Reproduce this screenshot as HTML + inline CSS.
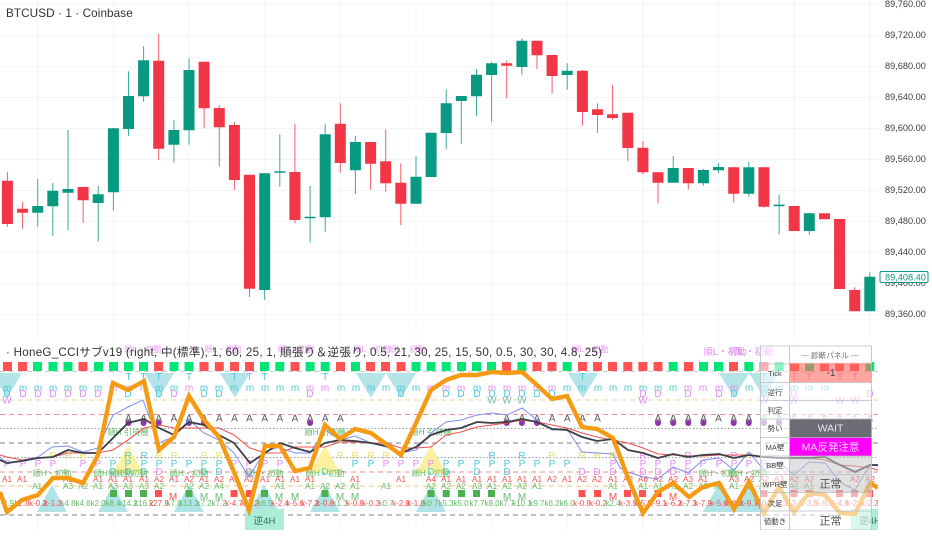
<!DOCTYPE html>
<html><head><meta charset="utf-8"><title>BTCUSD</title>
<style>
html,body{margin:0;padding:0;background:#fff;width:932px;height:550px;overflow:hidden}
svg{display:block;filter:blur(.35px)}
text{font-family:"Liberation Sans","Noto Sans CJK JP",sans-serif}
.ax{font-size:9.2px;fill:#3a3d45}
.t{font-size:9.2px;fill:#3a3d45;text-anchor:middle}
.s{font-size:10px;text-anchor:middle}
.pk{fill:#e58af5}.tl{fill:#4fcbd6}.yl{fill:#ece27a}.gn{fill:#66bb6a}.rd{fill:#ef5350}.dk{fill:#5a5a5a}
.n{font-size:8px;text-anchor:middle;fill:#66bb6a}.m{font-size:8px;text-anchor:middle;fill:#ef5350}
.j{font-size:8.2px;text-anchor:middle;fill:#66bb6a}
.l{font-size:7.5px;text-anchor:middle;fill:#444}
</style></head><body>
<svg width="932" height="550" viewBox="0 0 932 550" xmlns="http://www.w3.org/2000/svg">
<rect width="932" height="550" fill="#fff"/>
<defs><clipPath id="c"><rect x="0" y="338" width="878" height="192"/></clipPath><clipPath id="t"><rect x="0" y="530" width="878" height="20"/></clipPath><clipPath id="a"><rect x="880" y="340" width="52" height="190"/></clipPath></defs>

<!-- grid -->
<path d="M37.7 0V335M113.4 0V335M189 0V335M264.7 0V335M340.3 0V335M416 0V335M491.6 0V335M567.2 0V335M642.9 0V335M718.5 0V335M794.2 0V335M869.8 0V335M37.7 338V530M113.4 338V530M189 338V530M264.7 338V530M340.3 338V530M416 338V530M491.6 338V530M567.2 338V530M642.9 338V530M718.5 338V530M794.2 338V530M869.8 338V530" stroke="#f3f4f6" stroke-width="1" fill="none"/>
<path d="M0 4.5H878M0 35.5H878M0 66.5H878M0 97.5H878M0 128.5H878M0 159.5H878M0 190.5H878M0 221.5H878M0 252.5H878M0 283.5H878M0 314.5H878" stroke="#f3f4f6" stroke-width="1" fill="none"/>

<!-- wicks -->
<g stroke-width="1" fill="none" stroke-opacity=".8">
<path stroke="#089981" d="M37.7 179V226.7M52.8 183V236M68 130V230.3M98.2 185.7V241.7M113.4 128V210.7M128.5 71.3V135.7M143.6 46.3V101.7M173.9 120.3V162.7M189 58V144.7M264.7 173V299.7M279.8 134.3V186.7M310.1 185.7V242.7M325.2 124.3V231.7M355.4 135.7V194M416 156V204M446.2 89.3V149.3M461.3 96V143.7M476.5 69V116M491.6 62V121.7M521.9 38.3V75M567.2 63.3V89.7M673.2 156V182.7M703.4 169V185.7M718.5 163.3V173M748.8 162V196.7M779.1 194.7V234.3M809.3 213V235M869.8 272.3V311"/>
<path stroke="#f23645" d="M7.4 172V227M22.6 201.7V228.7M83.1 187V222.7M158.7 34V160M204.1 62V128.3M219.3 105.3V166.7M234.4 122V190M249.5 175V297M294.9 124V223.3M340.3 103.3V172.7M370.6 142V190M385.7 129.3V191.7M400.8 163.3V225M506.7 60.7V98.3M537 41V69M552.1 55V93.7M582.4 70V125.7M597.5 103.3V133M612.6 85V119.7M627.8 113V161.3M642.9 141V174.3M658 172V203.3M688.3 168V189.3M733.7 167V202.7M763.9 167V207.7M854.7 287.3V311"/>
</g>
<!-- doji bars -->
<path fill="#089981" d="M274.3 171.3h11v1.5h-11zM304.6 216.7h11v1.5h-11zM773.6 204.6h11v1.6h-11z"/>
<!-- green bodies -->
<path fill="#089981" d="M32.2 206h11V212.7h-11zM47.3 190.7h11V206.3h-11zM62.5 189h11V192.7h-11zM92.7 194.3h11V203h-11zM107.9 128.3h11V192.3h-11zM123 96h11V129h-11zM138.1 60.3h11V96.3h-11zM168.4 130h11V144.7h-11zM183.5 70h11V130.3h-11zM259.2 173.3h11V290h-11zM319.7 134.3h11V217.3h-11zM349.9 142h11V170.3h-11zM410.5 176.7h11V203.7h-11zM425.6 132.7h11V177h-11zM440.7 103.3h11V133h-11zM455.8 96h11V101h-11zM471 74.7h11V96.3h-11zM486.1 63.3h11V75h-11zM516.4 40.7h11V67h-11zM561.7 70.7h11V75h-11zM667.7 168h11V182.7h-11zM697.9 170h11V183.3h-11zM713 167h11V170.3h-11zM743.3 167.3h11V193.7h-11zM803.8 213.3h11V231h-11zM864.3 276.7h11V311.3h-11z"/>
<!-- red bodies -->
<path fill="#f23645" d="M1.9 180.7h11V224h-11zM17.1 208.7h11V212.7h-11zM77.6 187h11V200.3h-11zM153.2 60.7h11V148.7h-11zM198.6 61.7h11V108.3h-11zM213.8 108h11V127.3h-11zM228.9 125h11V180h-11zM244 174.7h11V288.7h-11zM289.4 172h11V220h-11zM334.8 123.7h11V163h-11zM365.1 142h11V163.7h-11zM380.2 161.3h11V183.3h-11zM395.3 182.7h11V203.7h-11zM501.2 63.3h11V65.7h-11zM531.5 40.7h11V55.3h-11zM546.6 55h11V76h-11zM576.9 70.7h11V112h-11zM592 109.3h11V115h-11zM607.1 114.3h11V118h-11zM622.3 112.7h11V148h-11zM637.4 147.7h11V172.3h-11zM652.5 172.3h11V182.7h-11zM682.8 168h11V183.3h-11zM728.2 167.3h11V193.7h-11zM758.4 167.3h11V206.7h-11zM788.7 206h11V231h-11zM819 213.3h11V219.3h-11zM834.1 219h11V289h-11zM849.2 290h11V311.3h-11z"/>

<text x="6" y="17" font-size="11.7" fill="#333" letter-spacing=".1">BTCUSD · 1 · Coinbase</text>

<!-- price axis -->
<g class="ax">
<text class="ax" x="885" y="7">89,760.00</text>
<text class="ax" x="885" y="38">89,720.00</text>
<text class="ax" x="885" y="69">89,680.00</text>
<text class="ax" x="885" y="100">89,640.00</text>
<text class="ax" x="885" y="131">89,600.00</text>
<text class="ax" x="885" y="162">89,560.00</text>
<text class="ax" x="885" y="193">89,520.00</text>
<text class="ax" x="885" y="224">89,480.00</text>
<text class="ax" x="885" y="255">89,440.00</text>
<text class="ax" x="885" y="286">89,400.00</text>
<text class="ax" x="885" y="317">89,360.00</text>
</g>
<rect x="880" y="271.5" width="48" height="11" rx="1.5" fill="#fff" stroke="#089981" stroke-width="1"/>
<text x="885" y="280.5" font-size="9.2" fill="#089981">89,408.40</text>

<!-- lower pane -->
<g clip-path="url(#c)">
<path d="M0 371.5H878" stroke="#bdbdbd" stroke-dasharray="5 4" stroke-width="1" opacity=".7"/>
<path d="M0 400H878" stroke="#f2d39a" stroke-dasharray="5 4" stroke-width="1"/>
<path d="M0 414.5H878" stroke="#f28b93" stroke-dasharray="5 4" stroke-width="1"/>
<path d="M0 428.5H878" stroke="#9e9e9e" stroke-dasharray="1.5 2" stroke-width="1"/>
<path d="M0 443H878" stroke="#9a9a9a" stroke-dasharray="5 4" stroke-width="1.2"/>
<path d="M0 457.5H878" stroke="#9e9e9e" stroke-dasharray="1.5 2" stroke-width="1"/>
<path d="M0 472H878" stroke="#f28b93" stroke-dasharray="5 4" stroke-width="1"/>
<path d="M0 486H878" stroke="#f2c77a" stroke-dasharray="5 4" stroke-width="1"/>
<path d="M0 515H878" stroke="#9e9e9e" stroke-dasharray="5 4" stroke-width="1.2"/>

<!-- down triangles -->
<path fill="#b4e4e8" d="M-8 373h30L7 398zM144 373h30L159 398zM220 373h30L235 398zM356 373h30L371 398zM386 373h30L401 398zM568 373h30L583 398zM719 373h30L734 398zM749 373h30L764 398z"/>
<!-- up triangles -->
<path fill="#b0e4e6" d="M37 512h30L52 485zM98 512h30L113 485zM174 512h30L189 485zM249 512h30L264 485zM310 512h30L325 485zM416 512h30L431 485zM703 512h30L718 485zM733 512h30L748 485z"/>
<path fill="#fdf1a0" d="M113 473h30L128 445zM310 473h30L325 445zM416 473h30L431 445z"/>

<!-- ghost top labels -->
<g font-size="8.2" fill="#ee9df7" text-anchor="middle">
<text x="143" y="352">順L・初動</text><text x="223" y="352">順L・初動</text><text x="296" y="352">順L・初動</text>
<text x="372" y="352">順L・初動</text><text x="407" y="352">順L・初動</text><text x="590" y="352">順L・初動</text>
</g>
<g font-size="9.4" fill="#e58af5" text-anchor="middle">
<text x="725" y="355">順L・初動</text><text x="752" y="355">順L・初動</text>
</g>

<!-- top squares -->
<g>
<path fill="#ff5252" d="M3 362h9v9h-9zM18 362h9v9h-9zM78.5 362h9v9h-9zM154 362h9v9h-9zM199.5 362h9v9h-9zM214.8 362h9v9h-9zM230 362h9v9h-9zM245 362h9v9h-9zM290.5 362h9v9h-9zM336 362h9v9h-9zM366 362h9v9h-9zM381 362h9v9h-9zM396.5 362h9v9h-9zM502 362h9v9h-9zM532.5 362h9v9h-9zM547.5 362h9v9h-9zM578 362h9v9h-9zM593 362h9v9h-9zM608 362h9v9h-9zM623.3 362h9v9h-9zM638.4 362h9v9h-9zM653.5 362h9v9h-9zM684 362h9v9h-9zM729 362h9v9h-9zM759.5 362h9v9h-9zM790 362h9v9h-9zM820 362h9v9h-9zM835 362h9v9h-9zM850 362h9v9h-9z"/>
<path fill="#00e676" d="M33 362h9v9h-9zM48.5 362h9v9h-9zM63.5 362h9v9h-9zM94 362h9v9h-9zM109 362h9v9h-9zM124 362h9v9h-9zM139 362h9v9h-9zM169.5 362h9v9h-9zM184.5 362h9v9h-9zM260 362h9v9h-9zM275.3 362h9v9h-9zM305.6 362h9v9h-9zM320.7 362h9v9h-9zM351 362h9v9h-9zM411.5 362h9v9h-9zM426.6 362h9v9h-9zM441.7 362h9v9h-9zM457 362h9v9h-9zM472 362h9v9h-9zM487 362h9v9h-9zM517.4 362h9v9h-9zM562.7 362h9v9h-9zM668.7 362h9v9h-9zM699 362h9v9h-9zM714 362h9v9h-9zM744.3 362h9v9h-9zM774.6 362h9v9h-9zM805 362h9v9h-9zM865.3 362h9v9h-9z"/>
</g>

<!-- letter rows -->
<g>
<text class="s tl" x="128.5 143.6 158.7 189 234.4 264.7 325.2 582.4 763.9" y="380">TTTTTTTTT</text>
<text class="s pk" x="249.5 794 809 840 855" y="380">TTTTT</text>
<text class="s tl" x="7 23 38 53 68 83 98 159 174 204 219 234 250 265 280 295 341 356 371 386 401 416 477 567 582 598 613 628 643 658 673 749 764 779 794 809 825" y="391">mmmmmmmmmmmmmmmmmmmmmmmmmmmmmmmmmmmmm</text>
<text class="s pk" x="113 128 144 189 310 325 431 446 461 492 507 522 537 552 688 703 719 734" y="391">mmmmmmmmmmmmmmmmmm</text>
<text class="s tl" x="7 128 159 204 219 401 446 461 477 492 507 522 537 552 734 764" y="397">DDDDDDDDDDDDDDDD</text>
<text class="s pk" x="23 38 53 68 83 98 174 310 643 658 688 719 794 870" y="397">DDDDDDDDDDDDDD</text>
<text class="s pk" x="7 643 764 794 840 855" y="403.5">WWWWWW</text>
<text class="s" fill="#7bb7b9" x="492 507 522" y="403.5">WWW</text>
<text class="s dk" x="128.5 143.6 158.7 173.9 189 204.1 219.3 234.4 249.5 264.7 279.8 294.9 310.1 325.2 340.3 506.7 521.9 537 552.1 567.2 582.4 597.5 658 673.2 688.3 703.4 718.5 733.7 748.8" y="421.5">AAAAAAAAAAAAAAAAAAAAAAAAAAAAA</text>
<text class="s" fill="#9aa" x="763.9 779.1 794.2 809.3 824.5 839.6 854.7 869.8" y="421.5">AAAAAAAA</text>
<g fill="#8e35a8"><circle cx="128.5" cy="423" r="3"/><circle cx="143.6" cy="423" r="3"/><circle cx="158.7" cy="423" r="3"/><circle cx="189" cy="423" r="3"/><circle cx="204.1" cy="423" r="3"/><circle cx="310.1" cy="423" r="3"/><circle cx="506.7" cy="423" r="3"/><circle cx="521.9" cy="423" r="3"/><circle cx="537" cy="423" r="3"/><circle cx="658" cy="423" r="3"/><circle cx="673.2" cy="423" r="3"/><circle cx="688.3" cy="423" r="3"/><circle cx="703.4" cy="423" r="3"/><circle cx="733.7" cy="423" r="3"/><circle cx="748.8" cy="423" r="3"/><circle cx="763.9" cy="423" r="3" opacity=".7"/><circle cx="779" cy="423" r="3" opacity=".7"/></g>

<text class="s yl" x="53 68 83 159 174 204 219 340 355 371 386 552 582 597 613 749" y="459">RRRRRRRRRRRRRRRR</text>
<text class="s tl" x="128 144 492 522" y="459">RRRR</text>
<text class="s pk" x="643 688 734" y="459">RRR</text>
<text class="s pk" x="7 23 38 53 83 98 234 249 265 280 386 401 416 431 613 643 658 673 688 703 719 734 749 764" y="467">PPPPPPPPPPPPPPPPPPPPPPPP</text>
<text class="s tl" x="113 128 144 159 174 189 204 219 355 371 446 461 477 492 507 522 537 552 567" y="467">PPPPPPPPPPPPPPPPPPP</text>
<text class="s tl" x="113 128 144 204 219 325 431 446 477 507" y="475">DDDDDDDDDD</text>
<text class="s pk" x="159 249 582 597 613 643 658 673 688" y="475">DDDDDDDDD</text>

<!-- green mid labels -->
<text class="j" x="128" y="435">順H 引待機</text><text class="j" x="325" y="435">順H 引待機</text><text class="j" x="431" y="435">順H 引待機</text>
<text class="j" x="52" y="476">順H・初動</text><text class="j" x="113" y="476">順H・初動</text><text class="j" x="128" y="476">順H・初動</text><text class="j" x="189" y="476">順H・初動</text><text class="j" x="264" y="476">順H・初動</text><text class="j" x="325" y="476">順H・初動</text><text class="j" x="431" y="476">順H・初動</text><text class="j" x="718" y="476">順H・初動</text><text class="j" x="748" y="476">順H・初動</text>

<g font-size="8.2" text-anchor="middle" fill="#ef5350">
<text x="7" y="482">A1</text><text x="22" y="482">A1</text><text x="68" y="482">A1</text><text x="98" y="482">A1</text><text x="113" y="482">A1</text><text x="128" y="482">A1</text><text x="144" y="482">A1</text><text x="159" y="482">A2</text><text x="174" y="482">A1</text><text x="189" y="482">A2</text><text x="204" y="482">A1</text><text x="219" y="482">A2</text><text x="234" y="482">A2</text><text x="249" y="482">A2</text><text x="265" y="482">A1</text><text x="280" y="482">A1</text><text x="295" y="482">A1</text><text x="310" y="482">A1</text><text x="355" y="482">A1</text><text x="401" y="482">A1</text><text x="431" y="482">A4</text><text x="446" y="482">A1</text><text x="461" y="482">A1</text><text x="477" y="482">A1</text><text x="492" y="482">A1</text><text x="507" y="482">A1</text><text x="522" y="482">A1</text><text x="537" y="482">A1</text><text x="552" y="482">A2</text><text x="567" y="482">A1</text><text x="582" y="482">A2</text><text x="597" y="482">A2</text><text x="613" y="482">A1</text><text x="628" y="482">A2</text><text x="643" y="482">A6</text><text x="658" y="482">A2</text><text x="673" y="482">A2</text><text x="688" y="482">A3</text><text x="703" y="482">A1</text><text x="734" y="482">A3</text><text x="749" y="482">A2</text><text x="764" y="482">A2</text><text x="779" y="482">A3</text><text x="794" y="482">A2</text><text x="809" y="482">A2</text><text x="855" y="482">A2</text><text x="870" y="482">A2</text>
</g>
<g font-size="8.2" text-anchor="middle" fill="#66bb6a">
<text x="37" y="489">A1</text><text x="68" y="489">A3</text><text x="83" y="489">A2</text><text x="98" y="489">A1</text><text x="113" y="489">A3</text><text x="128" y="489">A3</text><text x="144" y="489">A3</text><text x="159" y="489">A2</text><text x="189" y="489">A2</text><text x="204" y="489">A2</text><text x="219" y="489">A4</text><text x="280" y="489">A1</text><text x="310" y="489">A1</text><text x="325" y="489">A2</text><text x="340" y="489">A2</text><text x="355" y="489">A1</text><text x="386" y="489">A1</text><text x="431" y="489">A2</text><text x="446" y="489">A2</text><text x="461" y="489">A2</text><text x="477" y="489">A3</text><text x="492" y="489">A1</text><text x="507" y="489">A2</text><text x="522" y="489">A2</text><text x="537" y="489">A1</text><text x="613" y="489">A1</text><text x="643" y="489">A1</text><text x="658" y="489">A1</text><text x="673" y="489">A1</text><text x="688" y="489">A2</text><text x="703" y="489">A2</text><text x="719" y="489">A1</text><text x="734" y="489">A1</text><text x="749" y="489">A1</text><text x="764" y="489">A4</text><text x="794" y="489">A1</text><text x="809" y="489">A1</text>
</g>
<path fill="#4caf50" d="M110 490h7v7h-7zM125 490h7v7h-7zM140 490h7v7h-7zM185.5 490h7v7h-7zM261 490h7v7h-7zM321.5 490h7v7h-7zM427.5 490h7v7h-7zM442.7 490h7v7h-7zM458 490h7v7h-7zM473 490h7v7h-7zM488 490h7v7h-7z"/>
<path fill="#ff5252" d="M155 490h7v7h-7zM230.5 490h7v7h-7zM246 490h7v7h-7zM578.5 490h7v7h-7zM594 490h7v7h-7zM624 490h7v7h-7zM639 490h7v7h-7zM654.5 490h7v7h-7zM760.5 490h7v7h-7zM790.5 490h7v7h-7zM805.5 490h7v7h-7zM836 490h7v7h-7zM851 490h7v7h-7zM866 490h7v7h-7z"/>
<text class="s gn" x="204 219 279 295 340 355 507 522" y="500">MMMMMMMM</text>
<text class="s rd" x="173 613 673" y="500">MMM</text>

<g class="nums">
<text class="n" x="7" y="506">-2.9</text><text class="m" x="22" y="506">k2.8</text><text class="m" x="38" y="506">k-0.2</text><text class="m" x="53" y="506">k-1.3</text><text class="n" x="68" y="506">k4.8</text><text class="n" x="83" y="506">k4.6</text><text class="n" x="98" y="506">k2.0</text><text class="n" x="113" y="506">k8.4</text><text class="n" x="128" y="506">k14.2</text><text class="n" x="144" y="506">k16.2</text><text class="m" x="159" y="506">k27.8</text><text class="n" x="174" y="506">k7.8</text><text class="n" x="189" y="506">k13.2</text><text class="n" x="204" y="506">k7.2</text><text class="n" x="219" y="506">k7.2</text><text class="m" x="234" y="506">k-4.7</text><text class="m" x="250" y="506">k-7.2</text><text class="n" x="265" y="506">k6.5</text><text class="m" x="280" y="506">k-2.4</text><text class="m" x="295" y="506">k-5.6</text><text class="m" x="310" y="506">k-7.2</text>
<text class="m" x="325" y="506">k-0.8</text><text class="n" x="340" y="506">k1.3</text><text class="m" x="355" y="506">k-0.8</text><text class="m" x="371" y="506">k-0.3</text><text class="n" x="386" y="506">k0.7</text><text class="m" x="401" y="506">k-2.8</text><text class="m" x="416" y="506">k-1.8</text><text class="n" x="431" y="506">k0.7</text><text class="n" x="446" y="506">k5.3</text><text class="n" x="461" y="506">k5.0</text><text class="n" x="477" y="506">k7.7</text><text class="n" x="492" y="506">k8.0</text><text class="n" x="507" y="506">k7.7</text><text class="n" x="522" y="506">k10.1</text><text class="n" x="537" y="506">k9.7</text><text class="n" x="552" y="506">k6.2</text><text class="n" x="567" y="506">k6.0</text><text class="m" x="582" y="506">k-0.8</text><text class="m" x="598" y="506">k-0.2</text><text class="n" x="613" y="506">k2.4</text>
<text class="m" x="628" y="506">k-3.5</text><text class="m" x="643" y="506">k-5.8</text><text class="m" x="658" y="506">k-9.1</text><text class="m" x="673" y="506">k-6.2</text><text class="m" x="688" y="506">k-7.3</text><text class="m" x="703" y="506">k-7.9</text><text class="m" x="719" y="506">k-5.6</text><text class="m" x="734" y="506">k-8.2</text><text class="m" x="749" y="506">k-9.7</text><text class="m" x="764" y="506">k-0.8</text><text class="m" x="779" y="506">k-6.1</text><text class="m" x="794" y="506">k-3.1</text><text class="m" x="809" y="506">k-3.5</text><text class="m" x="825" y="506">k-5.6</text><text class="m" x="840" y="506">k-4.8</text><text class="m" x="855" y="506">k-2.9</text><text class="m" x="870" y="506">k-2.3</text>
</g>
</g>

<!-- 逆4H boxes -->
<rect x="245" y="509" width="39" height="21.5" fill="#abeed5"/>
<text x="264.5" y="524" font-size="9.5" text-anchor="middle" fill="#2f6f5f">逆4H</text>
<rect x="851" y="509" width="27" height="21.5" fill="#abeed5"/>
<text x="870" y="524" font-size="9.5" text-anchor="middle" fill="#2f6f5f">逆4H</text>

<!-- indicator lines -->
<polyline fill="none" stroke="#7f8ff0" stroke-width="1" points="0,457 7,464 22,460 38,457 52,447 68,446 83,452 98,448 113,415 128,407 143,400 159,443 173,437 189,420 204,433 219,440 234,453 249,477 264,452 279,447 295,453 310,453 325,430 340,440 355,436 371,443 386,447 401,453 416,450 431,433 446,422 461,420 477,415 492,413 507,415 522,408 537,420 552,430 567,429 582,452 597,453 613,454 620,468 628,472 643,477 658,479 673,467 688,473 703,460 719,458 734,470 749,452 764,470 779,462 794,475 809,462 825,463 840,482 855,490 870,465 878,466"/>
<polyline fill="none" stroke="#ef5350" stroke-width="1.1" points="0,455 7,457 22,460 38,458 53,457 68,453 83,453 98,453 113,450 128,440 144,428 159,425 174,428 189,428 204,428 219,428 234,435 250,448 265,453 280,453 295,447 310,447 325,447 340,442 355,442 371,443 386,443 401,448 416,448 431,447 446,435 461,432 477,427 492,425 507,423 522,420 537,422 552,425 567,428 582,433 597,437 613,440 628,443 643,448 658,454 673,455 688,456 703,456 719,455 734,455 749,455 764,457 779,458 794,458 809,458 825,460 840,465 855,466 870,468 878,470"/>
<polyline fill="none" stroke="#3c3f48" stroke-width="1.8" points="0,460 7,463 22,461 38,458 53,457 68,450 83,453 98,453 113,438 128,423 144,419 159,428 174,435 189,422 204,425 219,435 234,443 250,463 265,453 280,443 295,448 310,452 325,443 340,440 355,441 371,443 386,446 401,453 416,447 431,435 446,430 461,428 477,422 492,423 507,422 522,419 537,422 552,429 567,430 582,437 597,441 613,439 628,450 643,453 658,458 673,454 688,457 703,455 719,454 734,458 749,455 764,457 779,458 794,458 809,458 825,457 840,465 855,472 870,465 878,465"/>
<polyline fill="none" stroke="#f59a13" stroke-width="4.4" stroke-linejoin="miter" points="0,492 7,512 22,500 38,495 53,478 68,478 83,483 98,455 113,383 128,390 144,381 159,450 174,437 189,396 204,420 219,437 234,472 249,510 265,446 280,446 295,471 310,468 325,425 340,439 355,429 371,433 386,444 401,455 416,423 431,390 446,380 461,375 477,375 492,372 507,373 522,372 537,385 552,399 567,396 582,427 597,429 613,438 628,478 643,513 658,492 673,483 689,497 703,487 719,483 734,509 749,482 764,513 779,487 794,512 809,493 825,495 840,513 855,514 870,483 878,488"/>

<!-- panel -->
<rect x="760" y="346" width="29.5" height="184" fill="#fff" fill-opacity=".55"/>
<rect x="789.5" y="346" width="82.5" height="18" fill="#fff" fill-opacity=".85"/>
<rect x="789.5" y="363" width="82.5" height="19.5" fill="#ff6b63" fill-opacity=".6"/>
<rect x="789.5" y="382.5" width="82.5" height="36.5" fill="#fff" fill-opacity=".55"/>
<rect x="789.5" y="419" width="82.5" height="18.5" fill="#6b6c74"/>
<rect x="789.5" y="437.5" width="82.5" height="18.5" fill="#ff00ff"/>
<rect x="789.5" y="456" width="82.5" height="36.5" fill="#c8c8c8" fill-opacity=".55"/>
<rect x="789.5" y="492.5" width="82.5" height="37.5" fill="#fff" fill-opacity=".55"/>
<path d="M760.5 346V530M789.5 346V530M871.5 346V530M760 346H872M760 382.5H872M760 400.5H872M760 419H872M760 437.5H872M760 456H872M760 474.5H872M760 492.5H872M760 511H872M760 530H872M760 364H789" stroke="#b8bcc4" stroke-width=".8" fill="none"/>
<text x="830" y="358" font-size="7.6" text-anchor="middle" fill="#666">--- 診断パネル ---</text>
<text class="l" x="775" y="376">Tick</text><text class="l" x="775" y="395">逆行</text><text class="l" x="775" y="413">判定</text><text class="l" x="775" y="431">勢い</text><text class="l" x="775" y="450">MA壁</text><text class="l" x="775" y="468">BB壁</text><text class="l" x="775" y="487">WPR壁</text><text class="l" x="775" y="506">次足</text><text class="l" x="775" y="524">値動き</text>
<text x="831" y="376" font-size="10" text-anchor="middle" fill="#444">-1</text>
<text x="830.5" y="431.5" font-size="10.5" text-anchor="middle" fill="#e8e8ea">WAIT</text>
<text x="830.5" y="450.5" font-size="10.5" text-anchor="middle" fill="#ffd6ff">MA反発注意</text>
<text x="830.5" y="487.5" font-size="11" text-anchor="middle" fill="#555">正常</text>
<text x="830.5" y="524.5" font-size="11" text-anchor="middle" fill="#555">正常</text>

<!-- sub axis -->
<g clip-path="url(#a)">
<text class="ax" x="886" y="360">600.00</text>
<text class="ax" x="886" y="389">400.00</text>
<text class="ax" x="886" y="418">200.00</text>
<text class="ax" x="886" y="446">0.00</text>
<text class="ax" x="885" y="475">−200.00</text>
<text class="ax" x="885" y="504">−400.00</text>
<text class="ax" x="885" y="532.5">−600.00</text>
</g>

<!-- legend -->
<text x="6" y="356" font-size="11.6" fill="#333" letter-spacing=".27">· HoneG_CCIサブv19 (right, 中(標準), 1, 60, 25, 1, 順張り＆逆張り, 0.5, 21, 30, 25, 15, 50, 0.5, 30, 30, 4.8, 25)</text>

<!-- time axis -->
<g clip-path="url(#t)">
<text class="t" x="37.7" y="543">05:40</text>
<text class="t" x="113.4" y="543">05:45</text>
<text class="t" x="189" y="543">05:50</text>
<text class="t" x="264.7" y="543">05:55</text>
<text class="t" x="340.3" y="543" font-weight="bold">06:00</text>
<text class="t" x="416" y="543">06:05</text>
<text class="t" x="491.6" y="543">06:10</text>
<text class="t" x="567.2" y="543">06:15</text>
<text class="t" x="642.9" y="543">06:20</text>
<text class="t" x="718.5" y="543">06:25</text>
<text class="t" x="794.2" y="543">06:30</text>
<text class="t" x="869.8" y="543">06:35</text>
</g>
</svg>
</body></html>
